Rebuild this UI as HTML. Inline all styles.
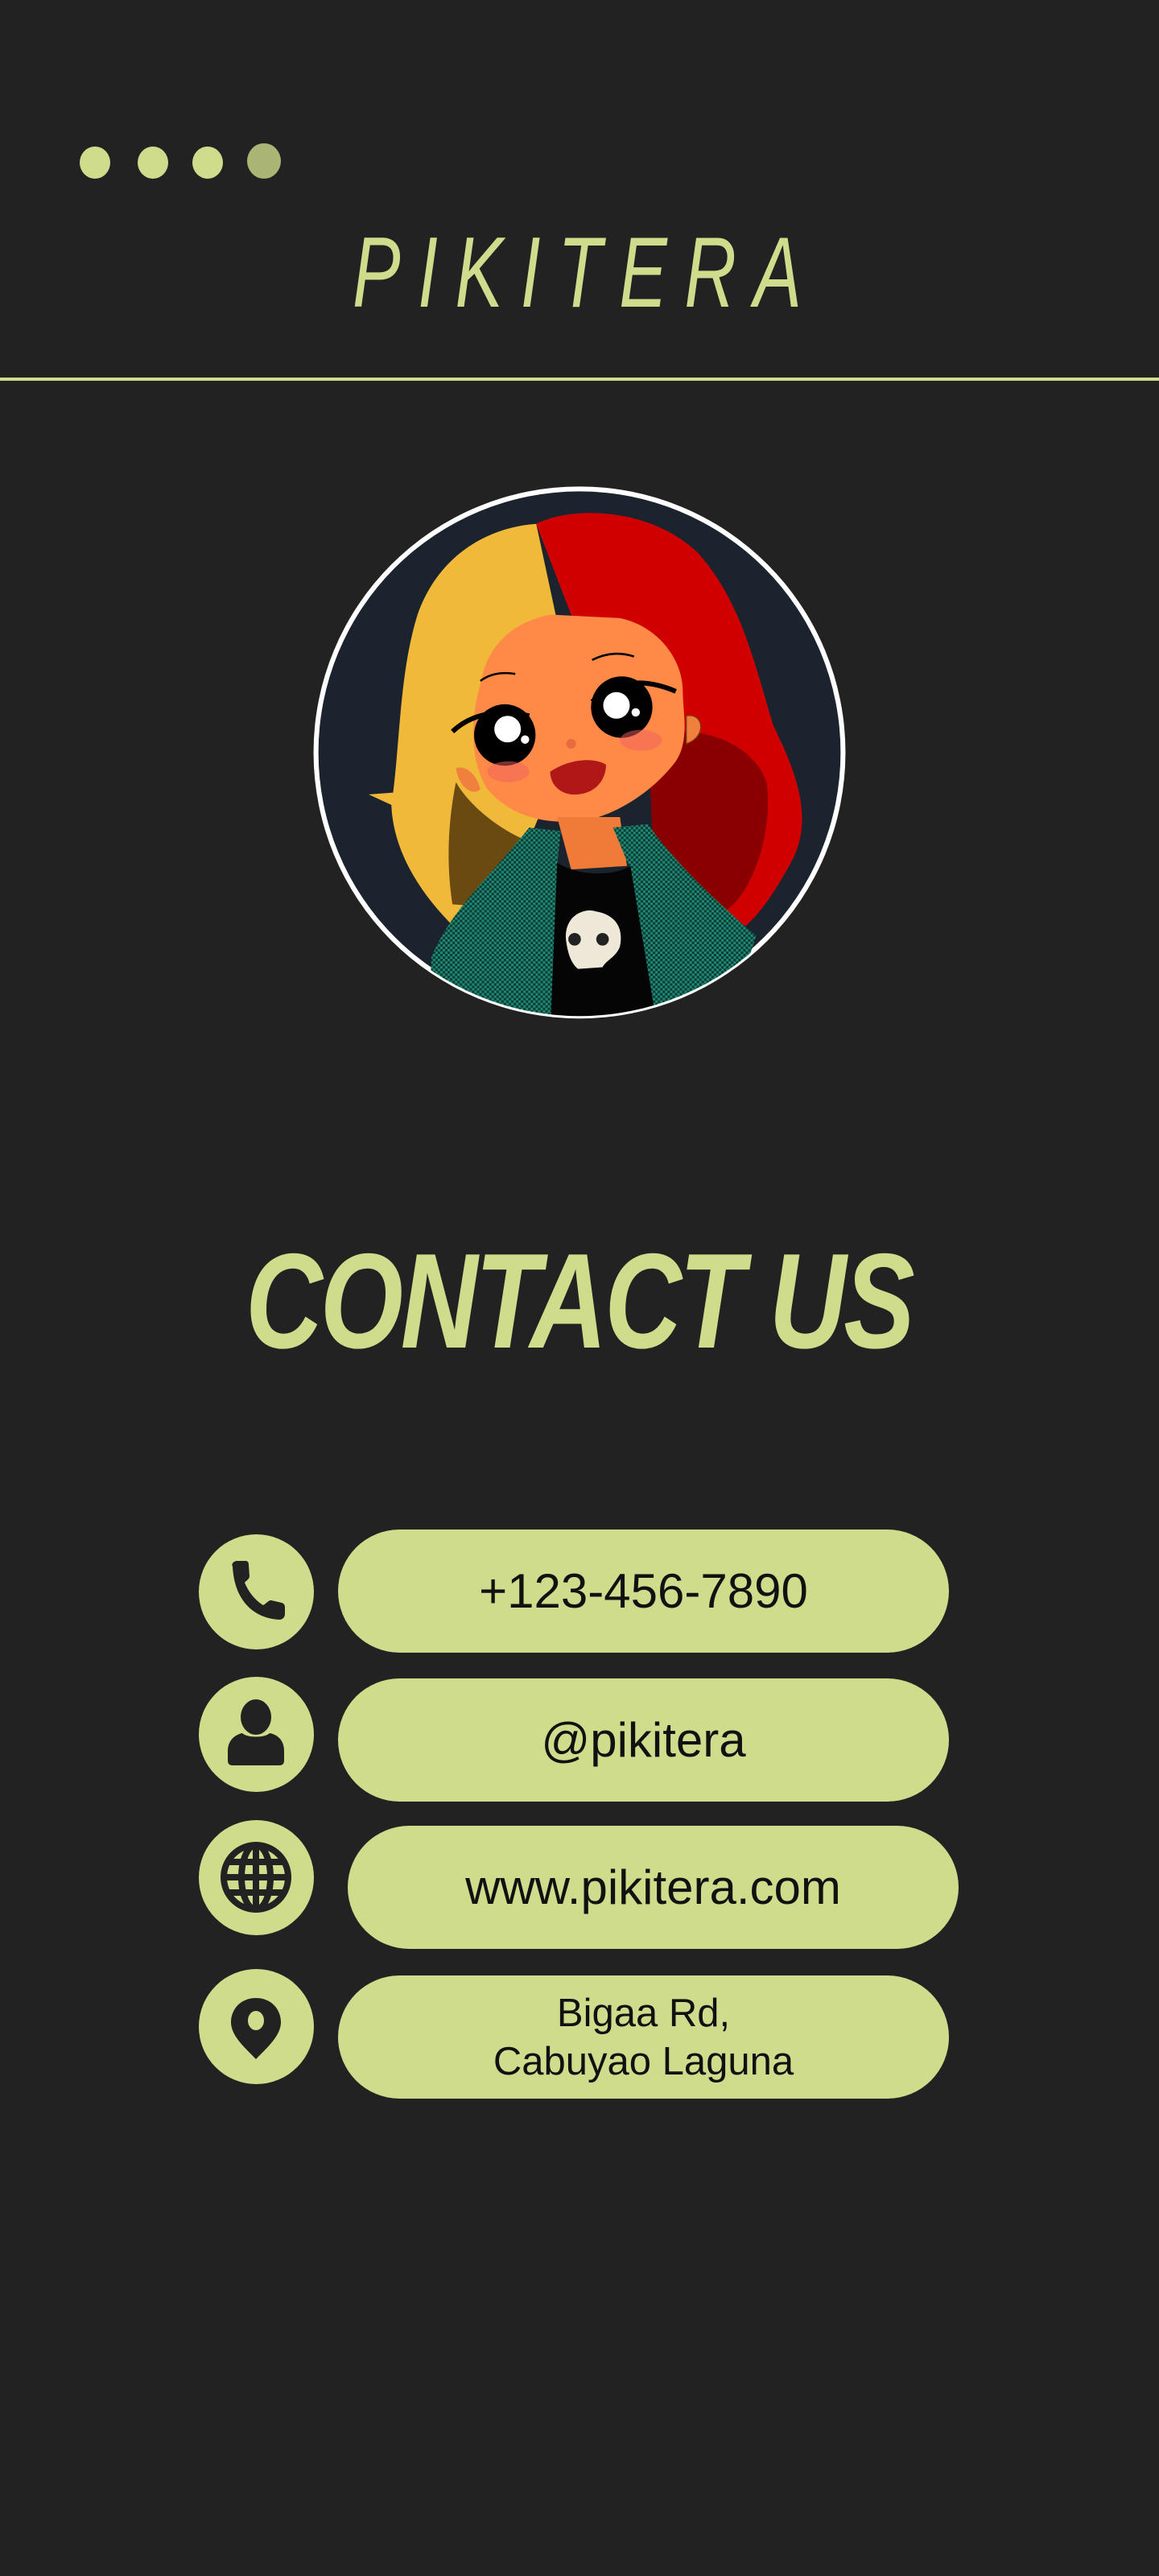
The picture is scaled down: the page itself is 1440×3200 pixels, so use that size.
<!DOCTYPE html>
<html><head><meta charset="utf-8">
<style>
html,body{margin:0;padding:0;background:#222222;}
body{width:1440px;height:3200px;position:relative;overflow:hidden;font-family:"Liberation Sans",sans-serif;}
.dot{position:absolute;width:38px;height:40px;border-radius:50%;background:#cfdc8c;top:182px;}
.title{position:absolute;left:438px;top:268px;width:570px;color:#cfdc8c;font-size:124px;font-style:italic;letter-spacing:30px;white-space:nowrap;transform-origin:left top;transform:scaleX(0.72);}
.line{position:absolute;left:0;top:469px;width:1440px;height:4px;background:#cfdc8c;}
.contact{position:absolute;left:305px;top:1520px;color:#cfdc8c;font-size:168px;font-weight:bold;font-style:italic;white-space:nowrap;transform-origin:left top;transform:scaleX(0.79);letter-spacing:-4px;}
.ic{position:absolute;left:247px;width:143px;height:143px;border-radius:50%;background:#cfdc8c;}
.ic svg{position:absolute;left:0;top:0;}
.pill{position:absolute;width:759px;height:153px;border-radius:77px;background:#cfdc8c;display:flex;align-items:center;justify-content:center;color:#111;font-size:60px;text-align:center;line-height:60px;}
</style></head><body>
<div class="dot" style="left:99px"></div>
<div class="dot" style="left:171px"></div>
<div class="dot" style="left:239px"></div>
<div class="dot" style="left:307px;width:42px;height:44px;top:178px;background:#a9b475"></div>
<div class="title">PIKITERA</div>
<div class="line"></div>

<svg style="position:absolute;left:380px;top:590px" width="680" height="690" viewBox="0 0 1568 1591">
<defs><clipPath id="c"><circle cx="784" cy="795" r="755"/></clipPath>
<pattern id="chk" width="14" height="14" patternUnits="userSpaceOnUse"><rect width="14" height="14" fill="#0c3a33"/><rect width="7" height="7" fill="#1f8a74"/><rect x="7" y="7" width="7" height="7" fill="#1f8a74"/></pattern></defs>
<circle cx="784" cy="795" r="762" fill="#fff"/>
<circle cx="784" cy="795" r="748" fill="#1b232e"/>
<g clip-path="url(#c)">
<path d="M660 140 C520 150 380 230 320 400 C270 560 270 750 250 910 L180 915 L245 945 C250 1080 330 1200 420 1290 L560 1240 L700 900 L720 420 Z" fill="#f0b93a"/>
<path d="M430 880 C470 950 560 1020 640 1050 L560 1240 L420 1230 C400 1100 410 980 430 880Z" fill="#6a4a10"/>
<path d="M660 140 C760 90 980 90 1120 220 C1250 360 1290 560 1340 720 C1420 880 1450 1000 1390 1110 C1340 1200 1300 1260 1250 1300 L1000 1200 L1000 700 L760 400 Z" fill="#d00000"/>
<path d="M980 760 C1100 700 1280 760 1320 880 C1340 1020 1280 1200 1200 1250 L1000 1180 Z" fill="#8a0000"/>
<path d="M700 400 C600 420 520 480 500 600 C470 700 470 820 520 900 C600 990 700 1000 800 990 C900 970 1000 900 1060 820 C1100 760 1080 680 1080 620 C1080 520 1000 430 900 410 Z" fill="#ff8a47"/>
<path d="M430 840 C460 830 490 860 500 900 C480 920 440 900 430 840Z" fill="#f0803e"/>
<path d="M1090 690 C1140 680 1150 750 1090 770 Z" fill="#f0803e" stroke="#7a3a10" stroke-width="3"/>
<path d="M720 980 L900 980 L920 1120 L760 1130 Z" fill="#f07a38"/>
<path d="M350 1600 L360 1380 C420 1240 520 1160 640 1010 L730 1020 L720 1120 L700 1600 Z" fill="url(#chk)"/>
<path d="M1000 1600 L930 1130 L880 1010 L980 1000 C1050 1100 1150 1200 1290 1320 L1200 1600 Z" fill="url(#chk)"/>
<path d="M720 1110 C780 1150 880 1150 930 1120 L1010 1600 L700 1600 Z" fill="#050505"/>
<path d="M745 1330 C740 1260 800 1240 830 1250 C890 1260 910 1300 900 1350 C890 1380 860 1390 850 1410 L780 1415 C760 1400 750 1370 745 1330Z" fill="#eee8d8"/>
<circle cx="770" cy="1330" r="18" fill="#222"/><circle cx="850" cy="1330" r="18" fill="#222"/>
<circle cx="570" cy="745" r="88" fill="#000"/><circle cx="578" cy="728" r="38" fill="#fff"/><circle cx="628" cy="758" r="12" fill="#fff"/>
<circle cx="905" cy="665" r="88" fill="#000"/><circle cx="890" cy="660" r="38" fill="#fff"/><circle cx="945" cy="680" r="12" fill="#fff"/>
<path d="M420 735 Q500 660 640 690" stroke="#000" stroke-width="14" fill="none"/>
<path d="M820 650 Q920 560 1060 620" stroke="#000" stroke-width="14" fill="none"/>
<path d="M500 590 Q540 560 600 570" stroke="#000" stroke-width="6" fill="none"/>
<path d="M820 530 Q880 500 940 520" stroke="#000" stroke-width="6" fill="none"/>
<ellipse cx="580" cy="850" rx="60" ry="30" fill="#f06060" opacity=".5"/>
<ellipse cx="960" cy="760" rx="60" ry="30" fill="#f06060" opacity=".5"/>
<circle cx="760" cy="770" r="14" fill="#e86a40"/>
<path d="M700 850 C760 810 830 810 860 830 C860 880 820 920 760 915 C720 910 700 880 700 850Z" fill="#b01818"/>
</g>
</svg>

<div class="contact">CONTACT US</div>

<div class="ic" style="top:1906px"><svg width="143" height="143" viewBox="0 0 143 143"><path d="M42 40 C40 36 44 33 48 33 L58 33 C61 33 62 35 62 38 L63 52 C63 56 58 58 57 60 C62 72 70 82 80 88 C84 86 86 82 90 82 L103 85 C106 86 107 88 107 91 L107 99 C107 103 104 106 100 106 C66 104 44 80 42 40Z" fill="#222"/></svg></div>
<div class="ic" style="top:2083px"><svg width="143" height="143" viewBox="0 0 143 143"><ellipse cx="71" cy="50" rx="19" ry="22" fill="#222"/><path d="M36 104 L36 92 C36 80 44 72 54 70 C60 76 82 76 88 70 C99 72 106 80 106 92 L106 104 C106 108 104 110 100 110 L42 110 C38 110 36 108 36 104Z" fill="#222"/></svg></div>
<div class="ic" style="top:2261px"><svg width="143" height="143" viewBox="0 0 143 143"><g fill="none" stroke="#222" stroke-width="8"><circle cx="71" cy="71" r="40"/><ellipse cx="71" cy="71" rx="18" ry="40"/><line x1="71" y1="31" x2="71" y2="111"/><line x1="31" y1="71" x2="111" y2="71"/><line x1="36" y1="52" x2="106" y2="52"/><line x1="36" y1="90" x2="106" y2="90"/></g></svg></div>
<div class="ic" style="top:2446px"><svg width="143" height="143" viewBox="0 0 143 143"><path d="M71 36 C52 36 40 50 40 66 C40 84 60 100 71 112 C82 100 102 84 102 66 C102 50 90 36 71 36Z" fill="#222"/><ellipse cx="71" cy="64" rx="10" ry="12" fill="#cfdc8c"/></svg></div>

<div class="pill" style="left:420px;top:1900px">+123-456-7890</div>
<div class="pill" style="left:420px;top:2085px">@pikitera</div>
<div class="pill" style="left:432px;top:2268px">www.pikitera.com</div>
<div class="pill" style="left:420px;top:2454px;font-size:49px;line-height:60px">Bigaa Rd,<br>Cabuyao Laguna</div>
</body></html>
